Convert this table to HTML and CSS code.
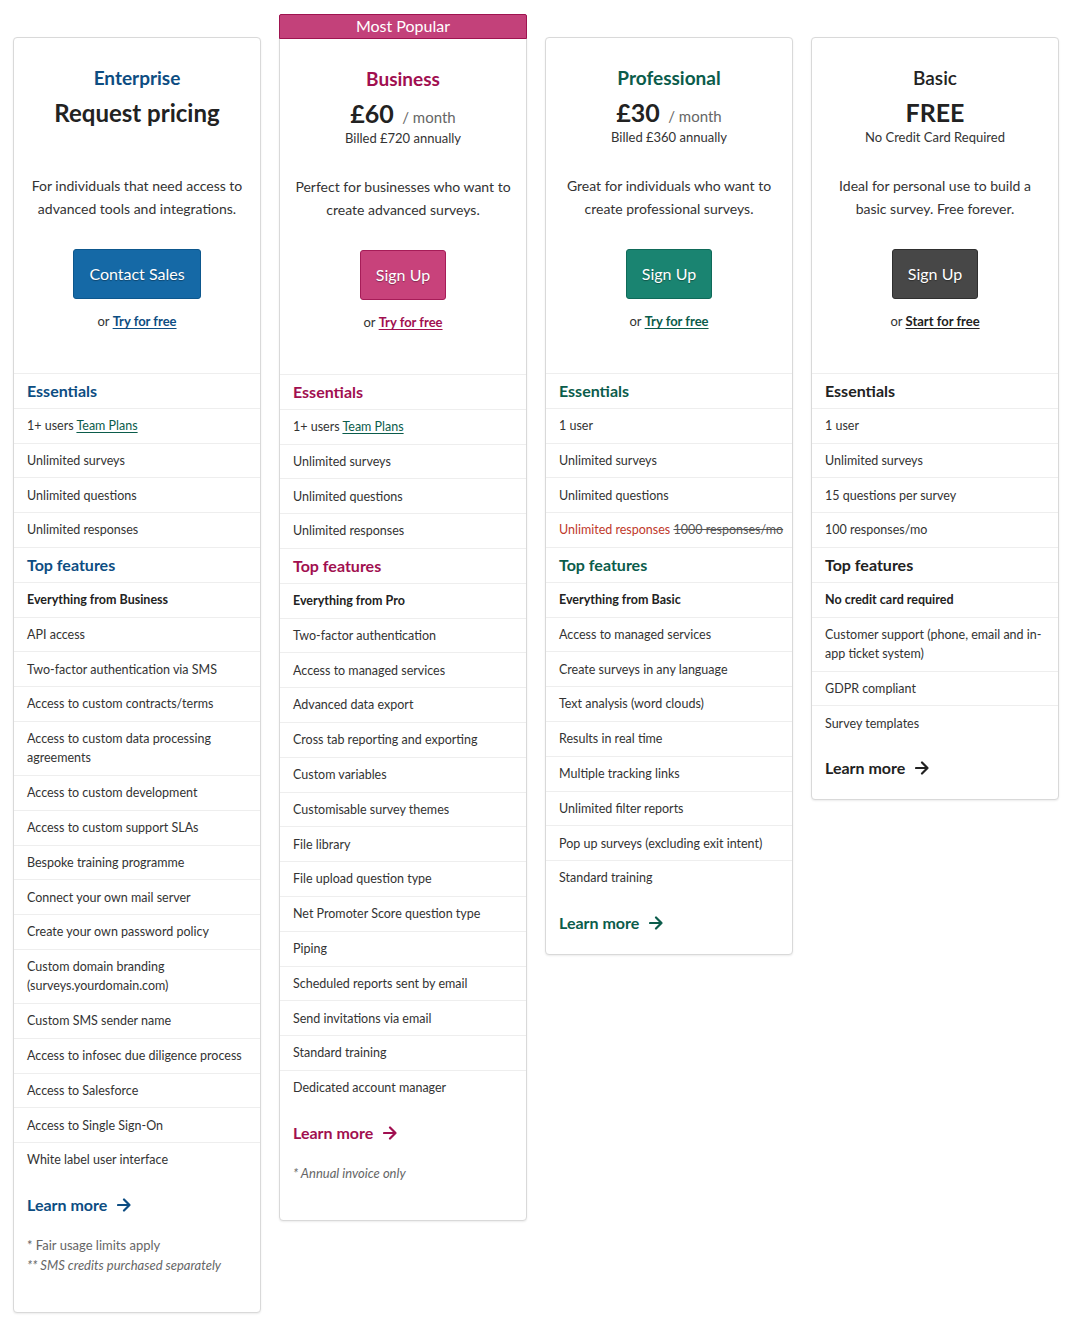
FILE: index.html
```html
<!DOCTYPE html>
<html lang="en">
<head>
<meta charset="utf-8">
<title>Pricing</title>
<link rel="stylesheet" href="styles.css">
</head>
<body>
<main class="plans">

  <section class="plan plan--enterprise">
    <header class="plan-head">
      <h2 class="plan-name">Enterprise</h2>
      <div class="plan-price">
        <div class="price"><span class="price-big price-big--text">Request pricing</span></div>
      </div>
      <p class="plan-desc">For individuals that need access to<br>advanced tools and integrations.</p>
      <a class="btn" href="#">Contact Sales</a>
      <p class="plan-try">or <a href="#">Try for free</a></p>
    </header>
    <ul class="features">
      <li class="feat-head">Essentials</li>
      <li>1+ users <a class="team" href="#">Team Plans</a></li>
      <li>Unlimited surveys</li>
      <li>Unlimited questions</li>
      <li>Unlimited responses</li>
      <li class="feat-head">Top features</li>
      <li class="strong">Everything from Business</li>
      <li>API access</li>
      <li>Two-factor authentication via SMS</li>
      <li>Access to custom contracts/terms</li>
      <li>Access to custom data processing agreements</li>
      <li>Access to custom development</li>
      <li>Access to custom support SLAs</li>
      <li>Bespoke training programme</li>
      <li>Connect your own mail server</li>
      <li>Create your own password policy</li>
      <li>Custom domain branding (surveys.yourdomain.com)</li>
      <li>Custom SMS sender name</li>
      <li>Access to infosec due diligence process</li>
      <li>Access to Salesforce</li>
      <li>Access to Single Sign-On</li>
      <li>White label user interface</li>
    </ul>
    <a class="learn" href="#">Learn more <svg class="arrow" viewBox="0 0 14 14" width="14" height="14" aria-hidden="true"><path d="M1 7h11.5M7 1.5L12.5 7 7 12.5" fill="none" stroke="currentColor" stroke-width="2.2" stroke-linecap="round" stroke-linejoin="round"/></svg></a>
    <div class="notes">
      <p>* Fair usage limits apply</p>
      <p class="it">** SMS credits purchased separately</p>
    </div>
  </section>

  <section class="plan plan--business">
    <div class="ribbon">Most Popular</div>
    <header class="plan-head">
      <h2 class="plan-name">Business</h2>
      <div class="plan-price">
        <div class="price"><span class="price-big">£60</span> <span class="per">/ month</span></div>
        <div class="billed">Billed £720 annually</div>
      </div>
      <p class="plan-desc">Perfect for businesses who want to<br>create advanced surveys.</p>
      <a class="btn" href="#">Sign Up</a>
      <p class="plan-try">or <a href="#">Try for free</a></p>
    </header>
    <ul class="features">
      <li class="feat-head">Essentials</li>
      <li>1+ users <a class="team" href="#">Team Plans</a></li>
      <li>Unlimited surveys</li>
      <li>Unlimited questions</li>
      <li>Unlimited responses</li>
      <li class="feat-head">Top features</li>
      <li class="strong">Everything from Pro</li>
      <li>Two-factor authentication</li>
      <li>Access to managed services</li>
      <li>Advanced data export</li>
      <li>Cross tab reporting and exporting</li>
      <li>Custom variables</li>
      <li>Customisable survey themes</li>
      <li>File library</li>
      <li>File upload question type</li>
      <li>Net Promoter Score question type</li>
      <li>Piping</li>
      <li>Scheduled reports sent by email</li>
      <li>Send invitations via email</li>
      <li>Standard training</li>
      <li>Dedicated account manager</li>
    </ul>
    <a class="learn" href="#">Learn more <svg class="arrow" viewBox="0 0 14 14" width="14" height="14" aria-hidden="true"><path d="M1 7h11.5M7 1.5L12.5 7 7 12.5" fill="none" stroke="currentColor" stroke-width="2.2" stroke-linecap="round" stroke-linejoin="round"/></svg></a>
    <div class="notes">
      <p class="it">* Annual invoice only</p>
    </div>
  </section>

  <section class="plan plan--pro">
    <header class="plan-head">
      <h2 class="plan-name">Professional</h2>
      <div class="plan-price">
        <div class="price"><span class="price-big">£30</span> <span class="per">/ month</span></div>
        <div class="billed">Billed £360 annually</div>
      </div>
      <p class="plan-desc">Great for individuals who want to<br>create professional surveys.</p>
      <a class="btn" href="#">Sign Up</a>
      <p class="plan-try">or <a href="#">Try for free</a></p>
    </header>
    <ul class="features">
      <li class="feat-head">Essentials</li>
      <li>1 user</li>
      <li>Unlimited surveys</li>
      <li>Unlimited questions</li>
      <li class="nowrap"><span class="promo">Unlimited responses</span> <s class="old">1000 responses/mo</s></li>
      <li class="feat-head">Top features</li>
      <li class="strong">Everything from Basic</li>
      <li>Access to managed services</li>
      <li>Create surveys in any language</li>
      <li>Text analysis (word clouds)</li>
      <li>Results in real time</li>
      <li>Multiple tracking links</li>
      <li>Unlimited filter reports</li>
      <li>Pop up surveys (excluding exit intent)</li>
      <li>Standard training</li>
    </ul>
    <a class="learn" href="#">Learn more <svg class="arrow" viewBox="0 0 14 14" width="14" height="14" aria-hidden="true"><path d="M1 7h11.5M7 1.5L12.5 7 7 12.5" fill="none" stroke="currentColor" stroke-width="2.2" stroke-linecap="round" stroke-linejoin="round"/></svg></a>
  </section>

  <section class="plan plan--basic">
    <header class="plan-head">
      <h2 class="plan-name">Basic</h2>
      <div class="plan-price">
        <div class="price"><span class="price-big">FREE</span></div>
        <div class="billed">No Credit Card Required</div>
      </div>
      <p class="plan-desc">Ideal for personal use to build a<br>basic survey. Free forever.</p>
      <a class="btn" href="#">Sign Up</a>
      <p class="plan-try">or <a href="#">Start for free</a></p>
    </header>
    <ul class="features">
      <li class="feat-head">Essentials</li>
      <li>1 user</li>
      <li>Unlimited surveys</li>
      <li>15 questions per survey</li>
      <li>100 responses/mo</li>
      <li class="feat-head">Top features</li>
      <li class="strong">No credit card required</li>
      <li>Customer support (phone, email and in-app ticket system)</li>
      <li>GDPR compliant</li>
      <li>Survey templates</li>
    </ul>
    <a class="learn" href="#">Learn more <svg class="arrow" viewBox="0 0 14 14" width="14" height="14" aria-hidden="true"><path d="M1 7h11.5M7 1.5L12.5 7 7 12.5" fill="none" stroke="currentColor" stroke-width="2.2" stroke-linecap="round" stroke-linejoin="round"/></svg></a>
  </section>

</main>
</body>
</html>
```

FILE: styles.css
```css
* { box-sizing: border-box; }

html, body {
  margin: 0;
  padding: 0;
  background: #fff;
}

body {
  font-family: Lato, "Open Sans", "Liberation Sans", sans-serif;
  color: #333;
}

.plans {
  display: grid;
  grid-template-columns: repeat(4, 248px);
  column-gap: 18px;
  align-items: start;
  padding: 37px 0 12px 13px;
}

.plan {
  position: relative;
  display: flex;
  flex-direction: column;
  background: #fff;
  border: 1px solid #d9d9d9;
  border-radius: 4px;
  box-shadow: 0 1px 2px rgba(0, 0, 0, 0.08);
  padding-bottom: 21px;
  --accent: #222;
  --btn: #474747;
  --btn-border: #2f2f2f;
}

.plan--enterprise { --accent: #0d4d82; --btn: #1569a6; --btn-border: #0d578d; }
.plan--business   { --accent: #a10f50; --btn: #c8427b; --btn-border: #a61c58; margin-top: 1px; border-top-left-radius: 0; border-top-right-radius: 0; }
.plan--pro        { --accent: #0b5c4b; --btn: #1a8471; --btn-border: #0f6a59; }
.plan--basic      { --accent: #222; --btn: #474747; --btn-border: #2f2f2f; }

.ribbon {
  position: absolute;
  top: -25px;
  left: -1px;
  right: -1px;
  height: 25px;
  background: #c3417a;
  border: 1px solid #9e1450;
  border-radius: 2px 2px 0 0;
  color: #fff;
  font-size: 16px;
  line-height: 22px;
  text-align: center;
}

/* header */
.plan-head {
  padding: 28px 6px 42px;
  text-align: center;
}

.plan-name {
  margin: 0;
  font-size: 19px;
  line-height: 24px;
  font-weight: 700;
  color: var(--accent);
}
.plan--basic .plan-name { font-weight: 600; }

.plan-price {
  height: 84px;
  padding-top: 6px;
}

.price {
  height: 32px;
  font-size: 25px;
  line-height: 32px;
  white-space: nowrap;
}

.price-big {
  font-size: 25px;
  font-weight: 700;
  color: #222;
}

.price-big--text {
  font-size: 24px;
}

.per {
  margin-left: 2px;
  font-size: 15px;
  line-height: 1;
  color: #666;
}

.billed {
  font-size: 13px;
  line-height: 18px;
  color: #333;
}

.plan-desc {
  margin: 0;
  font-size: 14px;
  line-height: 23px;
  color: #333;
}

.btn {
  display: inline-block;
  margin-top: 29px;
  height: 50px;
  padding: 0 15px;
  border: 1px solid var(--btn-border);
  border-radius: 3px;
  background: var(--btn);
  color: #fff;
  font-size: 16px;
  line-height: 48px;
  text-decoration: none;
  text-shadow: 0 1px 1px rgba(0, 0, 0, 0.35);
}

.plan-try {
  margin: 12px 0 0;
  font-size: 13px;
  line-height: 20px;
  color: #333;
}

.plan-try a {
  color: var(--accent);
  font-weight: 700;
  text-decoration: underline;
  text-underline-offset: 2px;
}

/* features */
.features {
  list-style: none;
  margin: 0;
  padding: 0;
  border-top: 1px solid #eee;
}

.features li {
  padding: 7.3px 13px;
  font-size: 12.5px;
  line-height: 19.2px;
  border-bottom: 1px solid #eee;
  color: #333;
}

.features li:last-child {
  border-bottom: 0;
}

.features li.feat-head {
  font-size: 16px;
  font-weight: 700;
  color: var(--accent);
}

.features li.strong {
  font-weight: 700;
  color: #222;
}

.features li.nowrap {
  white-space: nowrap;
  padding-right: 4px;
}

.team {
  color: #0b5c4b;
  text-decoration: underline;
  text-underline-offset: 2px;
}

.promo { color: #c0392b; }
.old { color: #555; }

.learn {
  display: flex;
  align-items: center;
  gap: 10px;
  margin-top: 18px;
  padding: 0 13px;
  font-size: 16px;
  line-height: 20px;
  font-weight: 700;
  color: var(--accent);
  text-decoration: none;
}

.arrow { display: block; }

.notes {
  margin: 20px 0 16px;
  padding: 0 13px;
  color: #666;
  font-size: 13px;
  line-height: 20px;
}

.notes p { margin: 0; }
.notes .it { font-style: italic; }
```
